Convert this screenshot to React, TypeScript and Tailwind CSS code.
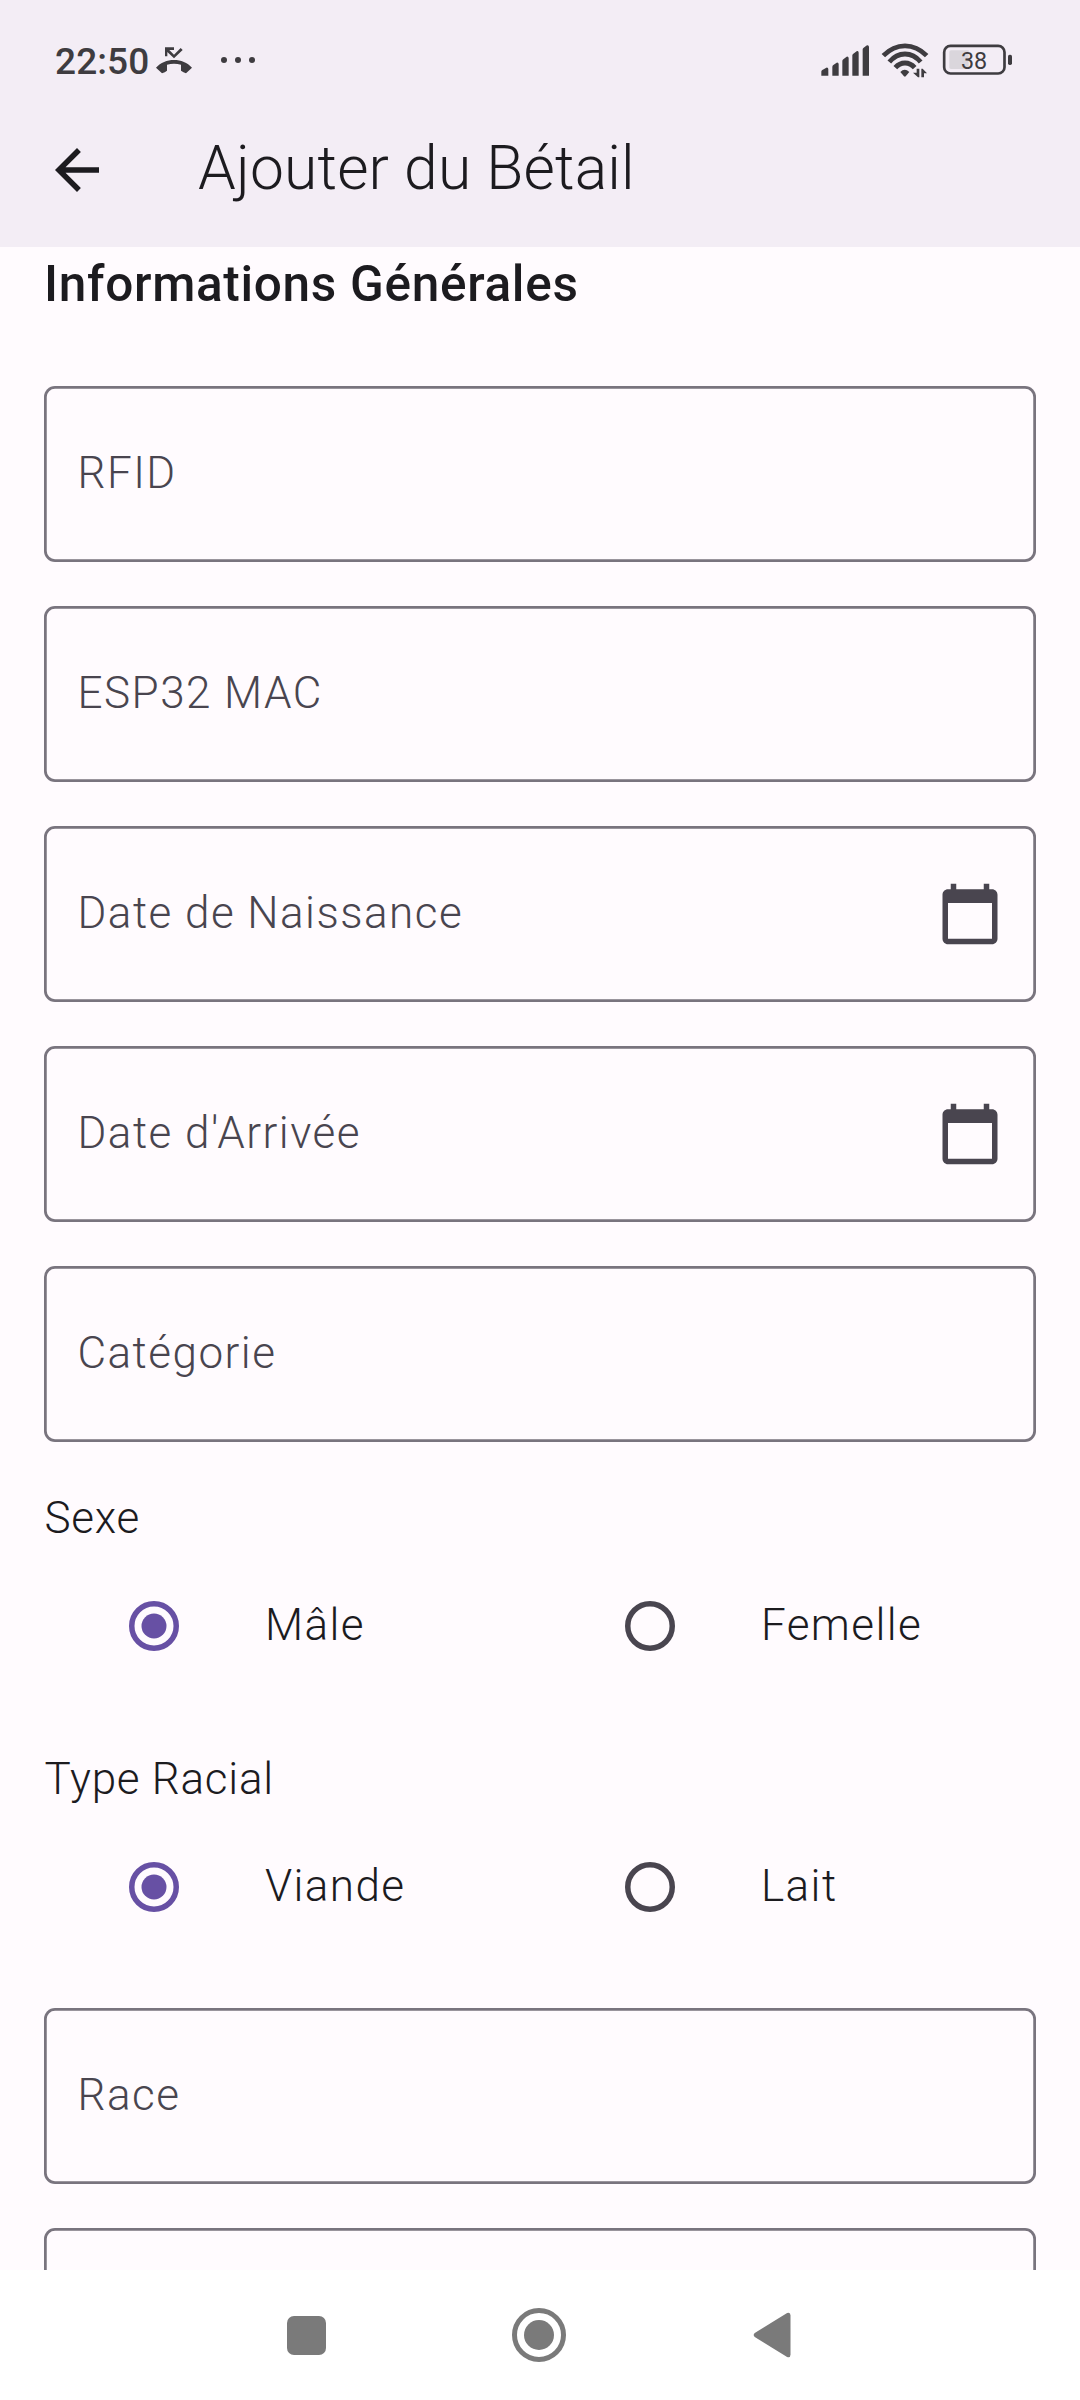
import type { ReactNode } from "react";

function MissedCallIcon() {
  return (
    <svg className="h-[29px] w-[38px]" viewBox="375 78 114 87" fill="#3e3c40">
      <path d="M405 82h27v8h-14l14 14 20-20 6 6-26 25-20-19v13h-7z" />
      <path d="M378 143c14-15 33-23 54-23s40 8 54 23l-18 17c-5-2-10-5-15-8v-18c-14-4-28-4-42 0v18c-4 3-9 6-15 8z" />
    </svg>
  );
}

function StatusIcons() {
  return (
    <svg className="h-[39px] w-[194px]" viewBox="60 64 582 117" fill="#3e3c40">
      {/* signal strength */}
      <path d="M64 168v-12q0-3 3-5l12-7q6-1 6 5v19z" />
      <path d="M97 168v-26q0-4 3-6l10-7q6-1 6 5v34z" />
      <path d="M127 168v-44q0-3 3-5l10-8q6-1 6 5v52z" />
      <path d="M157 168v-61q0-3 3-5l11-8q5-1 5 5v69z" />
      <path d="M188 168V89q0-3 3-5l10-7q6-1 6 5v86z" />
      {/* wifi */}
      <g fill="none" stroke="#3e3c40" strokeWidth="14.500">
        <path d="M250 108q29-29.500 65-29.500t65 29.500" />
        <path d="M268 127q20-24 47-24t47 24" />
        <path d="M286 144q12-14 29-14t29 14" />
      </g>
      <path d="M301 157q13-13 27 0l-11 13q-2 2-5 0z" />
      <path d="M350 147h8v26h-4l-15-14h11zM364 173v-26h4l13 14h-9v12z" />
      {/* battery */}
      <path d="M453 92h53v56h-53q-5 0-5-5V97q0-5 5-5z" fill="#dad6dc" />
      <rect x="432.500" y="78.500" width="181" height="83" rx="19" fill="none" stroke="#3e3c40" strokeWidth="8" />
      <rect x="624" y="105" width="12" height="31" rx="5" />
      <text x="522" y="147" textAnchor="middle" fontSize="70" fontFamily="Roboto, sans-serif" fontWeight="400">
        38
      </text>
    </svg>
  );
}

function CalendarIcon() {
  return (
    <svg className="size-[66px]" viewBox="0 0 24 24" fill="#49454f">
      <path d="M20 3h-1V1h-2v2H7V1H5v2H4c-1.100 0-2 .9-2 2v16c0 1.100.9 2 2 2h16c1.100 0 2-.9 2-2V5c0-1.100-.9-2-2-2zm0 18H4V8h16v13z" />
    </svg>
  );
}

function Field({ label, icon }: { label: string; icon?: ReactNode }) {
  return (
    <div className="flex h-44 shrink-0 items-center justify-between rounded-[11px] pr-[33px] pl-[33.5px] shadow-[inset_0_0_0_2.75px_#79747e]">
      <span className="pb-0.5 text-[44px] leading-[52px] font-light tracking-[1.48px] text-[#49454f]">{label}</span>
      {icon}
    </div>
  );
}

function Radio({ label, checked }: { label: string; checked?: boolean }) {
  return (
    <label className="flex h-[132px] items-center pl-[85px]">
      {checked ? (
        <svg className="size-[50px]" viewBox="0 0 50 50">
          <circle cx="25" cy="25" r="22.250" fill="none" stroke="#6750a4" strokeWidth="5.500" />
          <circle cx="25" cy="25" r="12.500" fill="#6750a4" />
        </svg>
      ) : (
        <svg className="size-[50px]" viewBox="0 0 50 50">
          <circle cx="25" cy="25" r="22.250" fill="none" stroke="#49454f" strokeWidth="5.500" />
        </svg>
      )}
      <span className="ml-[86px] pb-[3px] text-[44px] leading-[52px] font-light tracking-[1.4px]">{label}</span>
    </label>
  );
}

function RadioGroup({ title, options }: { title: string; options: [string, string] }) {
  return (
    <section>
      <h3 className="pl-[0.5px] text-[44px] leading-[52px] font-light tracking-[0.75px]">{title}</h3>
      <div className="mt-4 grid grid-cols-2">
        <Radio label={options[0]} checked />
        <Radio label={options[1]} />
      </div>
    </section>
  );
}

export default function App() {
  return (
    <div className="flex h-[2400px] w-[1080px] flex-col overflow-hidden bg-[#fffbfe] font-[Roboto,sans-serif] text-[#1c1b1f]">
      <header className="h-[247px] shrink-0 bg-[#f3edf5]">
        <div className="flex h-[93px] items-start pr-[66px] pl-[55px] text-[#3e3c40]">
          <span className="mt-10 w-[100px] text-[37px] leading-[43px] font-medium tracking-[0.1px]">22:50</span>
          <div className="mt-[46px]">
            <MissedCallIcon />
          </div>
          <div className="mt-[57px] ml-7 flex gap-2">
            <span className="size-1.5 rounded-full bg-[#3e3c40]" />
            <span className="size-1.5 rounded-full bg-[#3e3c40]" />
            <span className="size-1.5 rounded-full bg-[#3e3c40]" />
          </div>
          <div className="mt-[41px] ml-auto">
            <StatusIcons />
          </div>
        </div>
        <div className="flex h-[154px] items-center pl-11">
          <svg className="size-[66px]" viewBox="0 0 24 24" fill="currentColor">
            <path d="M20 11H7.830l5.590-5.590L12 4l-8 8 8 8 1.410-1.410L7.830 13H20v-2z" />
          </svg>
          <h1 className="ml-[88px] pb-[3px] text-[60.5px] leading-[71px] font-light tracking-[0.18px]">Ajouter du Bétail</h1>
        </div>
      </header>

      <main className="flex h-[2023px] shrink-0 flex-col overflow-hidden px-11 pt-2">
        <h2 className="shrink-0 text-[49.5px] leading-[58px] font-medium tracking-[0.7px]">Informations Générales</h2>
        <div className="mt-[73px] flex shrink-0 flex-col gap-11">
          <Field label="RFID" />
          <Field label="ESP32 MAC" />
          <Field label="Date de Naissance" icon={<CalendarIcon />} />
          <Field label="Date d'Arrivée" icon={<CalendarIcon />} />
          <Field label="Catégorie" />
        </div>
        <div className="mt-[50px] flex shrink-0 flex-col gap-[61px]">
          <RadioGroup title="Sexe" options={["Mâle", "Femelle"]} />
          <RadioGroup title="Type Racial" options={["Viande", "Lait"]} />
        </div>
        <div className="mt-[55.250px] flex shrink-0 flex-col gap-11">
          <Field label="Race" />
          <Field label="" />
        </div>
      </main>

      <nav className="flex h-[130px] shrink-0 items-center bg-white pl-[286.5px] text-[#7a7a7a]">
        <span className="size-[39px] rounded-[7px] bg-current" />
        <span className="ml-[186.5px] flex size-[54px] items-center justify-center rounded-full border-[5px] border-current">
          <span className="size-[30px] rounded-full bg-current" />
        </span>
        <svg className="ml-[187px] h-[46px] w-[38px]" viewBox="0 0 39 46" fill="currentColor">
          <path d="M35 .5Q38.500-.7 38.500 3v40q0 3.700-3.500 2.500L1.800 25q-2.200-2 0-4z" />
        </svg>
      </nav>
    </div>
  );
}
